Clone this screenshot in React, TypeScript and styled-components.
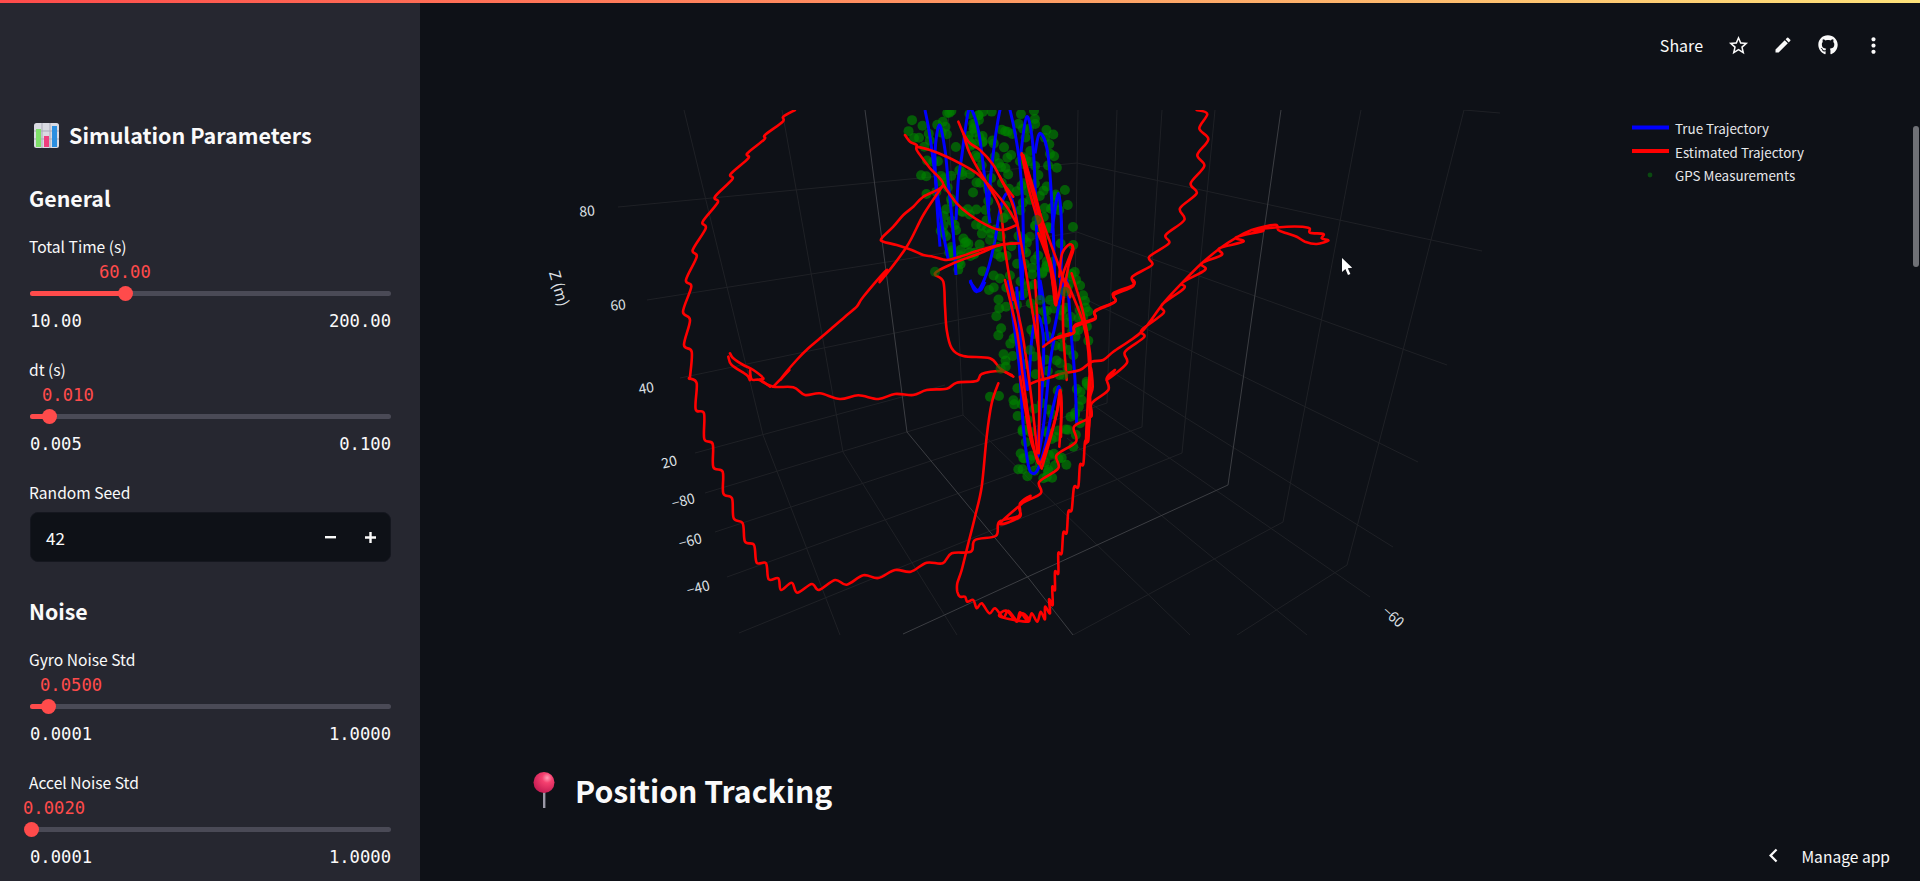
import React from "react";
import styled, { createGlobalStyle } from "styled-components";
import { MdStarBorder, MdEdit, MdMoreVert, MdChevronLeft } from "react-icons/md";
import { FaGithub } from "react-icons/fa";

const SANS = `"Noto Sans CJK SC", "Noto Sans", sans-serif`;
const MONO = `"DejaVu Sans Mono", monospace`;

const Global = createGlobalStyle`
  html, body { margin: 0; padding: 0; height: 100%; background: #0e1117; overflow: hidden; }
  body { font-family: ${SANS}; color: #fafafa; }
  * { box-sizing: border-box; }
`;

const Shell = styled.div`
  height: 881px;
  display: flex;
  flex-direction: column;
  overflow: hidden;
`;
const TopBar = styled.div`
  height: 3px;
  flex: none;
  background: linear-gradient(90deg, #ff4b4b, #fde27a);
`;
const Body = styled.div`
  flex: 1;
  display: flex;
  min-height: 0;
`;
const Sidebar = styled.aside`
  width: 420px;
  flex: none;
  background: #262730;
  padding: 112px 29px 0 30px;
  overflow: hidden;
`;
const Title = styled.h2`
  margin: 0 0 0 4px;
  height: 40px;
  display: flex;
  align-items: center;
  gap: 10px;
  font-size: 21.5px;
  font-weight: 600;
  line-height: 40px;
  white-space: nowrap;
`;
const Section = styled.h3<{ $top: number; $bottom: number }>`
  margin: ${(p) => p.$top}px 0 ${(p) => p.$bottom}px -1px;
  height: 32px;
  font-size: 21.3px;
  font-weight: 600;
  line-height: 32px;
`;
const Label = styled.div`
  height: 24px;
  margin-left: -1px;
  font-size: 15.6px;
  line-height: 24px;
  color: #fafafa;
  white-space: nowrap;
`;
const SliderField = styled.div`
  margin-bottom: 25px;
`;
const Rail = styled.div`
  position: relative;
  margin-top: 33px;
  height: 5px;
  border-radius: 3px;
  background: #4a4a56;
`;
const RailFill = styled.div<{ $w: number }>`
  position: absolute;
  left: 0;
  top: 0;
  bottom: 0;
  width: ${(p) => p.$w}px;
  border-radius: 3px;
  background: #ff4b4b;
`;
const Thumb = styled.div<{ $x: number }>`
  position: absolute;
  left: ${(p) => p.$x - 7.5}px;
  top: -5px;
  width: 15px;
  height: 15px;
  border-radius: 50%;
  background: #ff4b4b;
`;
const Value = styled.div<{ $x: number }>`
  position: absolute;
  left: ${(p) => p.$x}px;
  top: -30px;
  font-family: ${MONO};
  font-size: 17.2px;
  line-height: 22px;
  color: #ff4b4b;
  white-space: nowrap;
`;
const MinMax = styled.div`
  margin-top: 14px;
  height: 22px;
  display: flex;
  justify-content: space-between;
  font-family: ${MONO};
  font-size: 17.2px;
  line-height: 22px;
  color: #fafafa;
`;
const SeedBox = styled.div`
  margin-top: 8px;
  height: 50px;
  display: flex;
  align-items: center;
  padding-left: 15px;
  border-radius: 8px;
  background: #0e1117;
  border: 1px solid #15171f;
  font-size: 17px;
`;
const SeedValue = styled.span`
  flex: 1;
`;
const StepBtn = styled.span`
  width: 40px;
  display: flex;
  align-items: center;
  justify-content: center;
`;
const Main = styled.main`
  position: relative;
  flex: 1;
  min-width: 0;
  overflow: hidden;
`;
const Header = styled.header`
  height: 84px;
  display: flex;
  align-items: center;
  justify-content: flex-end;
  padding-right: 37px;
  gap: 25px;
`;
const Share = styled.span`
  font-size: 16px;
`;
const HeaderIcon = styled.span`
  display: flex;
  width: 20px;
  justify-content: center;
  color: #fafafa;
  svg { flex: none; }
`;
const PlotFrame = styled.div`
  height: 560px;
`;
const Plot = styled.svg`
  display: block;
  width: 1500px;
  height: 560px;
`;
const Heading = styled.h1`
  margin: 121px 0 0 113px;
  display: flex;
  align-items: center;
  gap: 20px;
  height: 44px;
  font-size: 30.2px;
  font-weight: 600;
  line-height: 44px;
  white-space: nowrap;
`;
const Scrollbar = styled.div`
  position: absolute;
  right: 1px;
  top: 123px;
  width: 6px;
  height: 141px;
  border-radius: 3px;
  background: #6f7176;
`;
const Manage = styled.div`
  position: absolute;
  right: 30px;
  bottom: 12px;
  display: flex;
  align-items: center;
  gap: 14px;
  font-size: 15.6px;
  line-height: 24px;
  color: #fafafa;
`;
const TickText = styled.text<{ $size?: number }>`
  font-family: ${SANS};
  font-size: ${(p) => p.$size ?? 14}px;
  fill: #dfe1e6;
`;
const LegendText = styled.text`
  font-family: ${SANS};
  font-size: 13.4px;
  fill: #e6e7ea;
`;

/* ---------- drawing data: points are read from the reference at 3x, per crop ---------- */
type Pt = [number, number];
const parse = (s: string): Pt[] =>
  s.trim().split(/\s+/).map((p) => {
    const [a, b] = p.split(",").map(Number);
    return [a, b] as Pt;
  });
const crop = (ox: number, oy: number, s: string): Pt[] =>
  parse(s).map(([x, y]) => [ox + x / 3, oy + y / 3] as Pt);
const Z3 = (s: string) => crop(530, 100, s);
const Z4 = (s: string) => crop(1000, 100, s);
const Z5 = (s: string) => crop(530, 370, s);
const Z6 = (s: string) => crop(1000, 370, s);
const Z10 = (s: string) => crop(880, 100, s);
const Z11 = (s: string) => crop(960, 280, s);

const OX = 420;
const OY = 87;
const line = (pts: Pt[]) => "M" + pts.map(([x, y]) => `${(x - OX).toFixed(1)} ${(y - OY).toFixed(1)}`).join("L");
const smooth = (pts: Pt[]) => {
  let d = `M${pts[0][0] - OX} ${pts[0][1] - OY}`;
  for (let i = 0; i < pts.length - 1; i++) {
    const p0 = pts[Math.max(0, i - 1)];
    const p1 = pts[i];
    const p2 = pts[i + 1];
    const p3 = pts[Math.min(pts.length - 1, i + 2)];
    d += `C${(p1[0] + (p2[0] - p0[0]) / 6 - OX).toFixed(1)} ${(p1[1] + (p2[1] - p0[1]) / 6 - OY).toFixed(1)} ${(p2[0] - (p3[0] - p1[0]) / 6 - OX).toFixed(1)} ${(p2[1] - (p3[1] - p1[1]) / 6 - OY).toFixed(1)} ${(p2[0] - OX).toFixed(1)} ${(p2[1] - OY).toFixed(1)}`;
  }
  return d;
};

const gridFaint: Pt[][] = [
  [[684,110],[763,435],[840,635]],
  [[782,110],[843,452],[957,635]],
  [[618,207],[1077,163],[1482,251]],
  [[647,300],[1077,232],[1447,365]],
  [[680,378],[1077,295],[1418,462]],
  [[695,453],[902,397],[945,385]],
  [[705,493],[963,415]],
  [[715,532],[1107,403]],
  [[727,577],[1142,427]],
  [[739,633],[1182,453]],
  [[1283,522],[1073,635]],
  [[1347,565],[1237,635]],
  [[963,415],[1190,635]],
  [[1067,438],[1307,635]],
  [[1093,405],[1370,597]],
  [[1117,375],[1393,547]],
  [[1361,110],[1312,370],[1283,522]],
  [[1464,110],[1398,370],[1347,565]],
  [[1464,110],[1500,113]],
  [[1215,110],[1190,370],[1182,453]],
  [[1162,110],[1145,370],[1142,427]],
  [[1117,110],[1107,403]],
  [[1078,110],[1075,295],[1075,385]],
  [[963,415],[948,110]],
];
const gridBright: Pt[][] = [
  [[865,110],[907,432],[1030,580],[1073,635]],
  [[903,634],[1228,485]],
  [[1281,110],[1243,380],[1228,485]],
];

const reds: Pt[][] = [
  [
    ...Z3("795,30 760,50 758,65 705,105 703,118 652,160 655,175 602,222 607,238 555,290 563,308 518,365 527,385 488,450 500,470 468,540 484,560 459,635 480,660 462,735 485,755 480,830"),
    ...Z5("478,25 500,40 497,118 522,130 523,207 548,222 550,291 578,305 580,370 606,385 611,445 638,460 645,515 672,525 680,578 708,580 716,628 745,625 753,660 785,638 802,668 845,642 867,660 915,630 950,644 1000,616 1045,624 1095,600 1142,605 1190,578 1238,580 1265,550 1323,545 1335,510 1398,497 1408,455 1467,437 1470,400 1500,380"),
    ...Z6("0,460 60,440 60,405 122,370 118,335 175,295 170,255 228,215 222,170 272,140 275,100 325,60 320,25 345,0"),
    ...Z4("320,840 380,790 375,755 432,712 425,690 490,640 485,615 552,565 547,548 615,510 605,490 665,465 658,445 730,425 708,412 790,392 755,390 860,380 925,383 930,398 970,402 965,415 985,422 950,432 915,425 890,410 860,400 835,390 830,375 800,378 755,390 710,412 660,445 605,490 550,545 490,610 430,690 385,725 340,755 310,780 275,785 240,810 190,820 150,832"),
    ...Z11("280,290 240,300 210,312"),
  ],
  [
    ...Z4("590,30 622,42 598,85 625,118 592,165 613,198 572,250 590,280 540,325 553,360 497,405 507,430 448,470 456,495 397,530 400,558 342,585 345,605 285,632 285,655 225,675 218,700 165,715"),
    ...Z11("330,160 285,175 250,200"),
  ],
  [
    ...Z5("1405,40 1385,100 1370,200 1355,350 1335,440 1315,520 1295,600 1282,640 1282,665 1290,680 1305,680 1312,695 1330,690 1340,715 1355,700 1378,730 1395,715 1420,742 1435,722 1460,750 1478,730 1495,755"),
    ...Z6("0,740 20,722 50,755 60,727 85,755 95,730 112,755 122,725 135,748 135,710 150,730 147,688 158,705 157,650 165,660 165,605 175,610 175,550 185,550 190,488 200,488 205,425 215,420 222,352 235,350 240,285 250,283 255,215 265,212 268,145 275,135 270,85 278,50 270,0"),
    ...Z11("378,485 390,405 385,215 370,130 340,50 315,0"),
    ...Z10("570,590 530,480 480,340 430,165"),
  ],
  [
    ...Z10("75,105 90,125 110,135 110,150 135,185 150,205 190,255 130,290 100,320 70,345 40,380 5,415 10,425 50,435 95,450 130,465 160,470 200,480 240,470 300,450 360,435 410,430"),
  ],
  [
    ...Z10("190,255 130,345 80,440 0,545"),
    ...Z3("1070,510 1000,590 980,620 945,650 905,685 870,715 835,745 800,780 750,840"),
    ...Z5("778,0 730,50"),
  ],
  [...Z10("110,140 150,150 200,170 240,190 290,220 340,270 380,320 410,370")],
  [...Z10("235,65 250,100 270,130 300,150 340,195 370,250 400,290")],
  [...Z10("250,100 265,150 290,200 320,250 360,325 375,450 400,600")],
  [...Z10("190,255 230,310 270,345 330,380 370,390 410,375")],
  [
    ...Z3("1450,830 1410,805 1380,775 1300,768 1265,745 1250,690 1245,620 1240,545 1215,520 1270,490 1350,460 1410,435 1470,430"),
  ],
  [
    ...Z3("600,760 610,775 640,795 670,810 700,835"),
    ...Z5("690,30 730,50 790,52 825,75 870,70 930,87 985,76 1045,87 1095,72 1150,75 1190,60 1250,56 1280,38 1340,33 1355,12 1410,3 1445,15"),
  ],
  [...Z3("595,770 605,795 650,825 660,840"), ...Z5("660,0 665,28 690,30 720,50")],
  [...Z10("425,165 450,250 480,360 505,470 525,560 530,600")],
  [...Z10("430,170 470,300 500,440 520,560")],
  [...Z11("135,0 170,150 190,300 210,440 235,550 260,500 290,400 302,340 303,470")],
  [...Z11("150,0 185,150 210,320 228,480 232,520")],
  [...Z11("225,0 232,120 238,300 236,520")],
  [...Z4("65,160 85,260 110,350 130,420 155,500 170,590 165,610 150,500 115,400")],
  [...Z4("165,610 175,590 190,520 205,480 218,440 205,435 185,465 178,530")],
  [...Z4("215,435 220,450 205,500 190,600 190,700 200,840")],
  [...Z4("0,230 40,320 65,440 95,620 130,840")],
  [...Z6("60,20 90,200 110,260 125,295")],
  [...Z6("125,295 150,210 170,130 180,60 185,120 178,230")],
  [...Z4("215,520 250,640 270,760 270,840")],
  [...Z11("285,175 340,160 345,140 405,118 405,95 465,65 460,40 520,15 520,0")],
];

const blues: Pt[][] = [
  Z10("135,30 150,110 175,300 190,400 205,480"),
  Z10("180,440 170,300 165,160 178,75 195,150 205,250 220,400 228,525"),
  Z10("228,360 235,240 245,170 265,35 282,45 300,120 325,330 330,370"),
  Z10("270,540 290,575 320,520 345,420 360,330 380,280 400,310 415,400 425,560 430,600"),
  Z10("325,330 335,200 360,30 375,20 390,30 420,200 430,400 425,600"),
  Z10("420,180 440,50 460,150 470,400 480,600"),
  Z10("465,160 480,100 505,170 520,400 525,600"),
  Z10("515,400 535,280 545,400 540,600"),
  Z11("145,0 160,120 178,260 190,440 205,555 218,580 235,565 255,500 275,400 295,322 300,340"),
  Z11("170,20 180,160 195,290 205,322 215,180 232,105 250,170 248,300 232,525 250,440 270,250 282,180"),
  Z11("240,0 250,60 265,180 280,160 300,60 320,0 335,180 345,300 350,430"),
  Z11("30,5 50,30 62,30 75,5"),
];

const inside = (x: number, y: number, poly: Pt[]) => {
  let c = false;
  for (let i = 0, j = poly.length - 1; i < poly.length; j = i++) {
    const [xi, yi] = poly[i];
    const [xj, yj] = poly[j];
    if (yi > y !== yj > y && x < ((xj - xi) * (y - yi)) / (yj - yi) + xi) c = !c;
  }
  return c;
};
const cloud: Pt[] = [[915,110],[1052,110],[1062,170],[1076,230],[1090,300],[1090,400],[1082,430],[1060,480],[1045,485],[1018,480],[1012,400],[1002,350],[990,310],[985,290],[1000,280],[950,270],[925,200],[908,130]];
const makeDots = () => {
  const out: Pt[] = [];
  let seed = 42;
  const rnd = () => {
    seed = (seed * 16807) % 2147483647;
    return seed / 2147483647;
  };
  while (out.length < 330) {
    const x = 905 + rnd() * 190;
    const y = 108 + rnd() * 380;
    if (inside(x, y, cloud)) out.push([x, y]);
  }
  return out;
};
const dots = makeDots();
const brownDots: Pt[] = [
  ...Z11("122,266 310,285 240,60 300,250 210,210"),
  ...Z10("370,355 330,420 470,360 450,410 555,575 165,515"),
];
const fixedDots: Pt[] = Z11("90,350 117,348 87,30 355,150 325,210 380,305 365,360 345,405 360,430 250,595 175,568 188,568 190,535 265,570");

const Sim = () => (
  <svg width="25" height="25" viewBox="0 0 25 25">
    <rect width="25" height="25" rx="2.5" fill="#d9dae2" />
    <path d="M0 8h25M0 16h25M8 0v25M16 0v25" stroke="#a9abb8" strokeWidth="1" />
    <rect x="2" y="6" width="5" height="18" fill="#7fe06a" />
    <rect x="10" y="13" width="5" height="11" fill="#ef3f7e" />
    <rect x="18" y="3" width="5" height="21" fill="#2b8fe0" />
  </svg>
);
const Pin = () => (
  <svg width="22" height="36" viewBox="0 0 22 36">
    <defs>
      <radialGradient id="ball" cx="0.65" cy="0.28" r="0.8">
        <stop offset="0" stopColor="#ff9db5" />
        <stop offset="0.3" stopColor="#f5406f" />
        <stop offset="1" stopColor="#c01850" />
      </radialGradient>
    </defs>
    <rect x="10" y="18" width="2.4" height="18" fill="#9a98a6" />
    <circle cx="11" cy="10.5" r="10.5" fill="url(#ball)" />
  </svg>
);

type SliderProps = { label: string; value: string; x: number; vx: number; min: string; max: string };
const Slider = ({ label, value, x, vx, min, max }: SliderProps) => (
  <SliderField>
    <Label>{label}</Label>
    <Rail>
      <RailFill $w={x} />
      <Thumb $x={x} />
      <Value $x={vx}>{value}</Value>
    </Rail>
    <MinMax>
      <span>{min}</span>
      <span>{max}</span>
    </MinMax>
  </SliderField>
);

const ticks: [string, number, number, number][] = [
  ["80", 587, 210, -5],
  ["60", 618, 304, -6],
  ["40", 646, 387, -10],
  ["20", 669, 461, -15],
  ["−80", 683, 500, -15],
  ["−60", 690, 540, -15],
  ["−40", 698, 587, -15],
  ["−60", 1394, 616, 42],
];

export default function App() {
  return (
    <Shell>
      <Global />
      <TopBar />
      <Body>
        <Sidebar>
          <Title>
            <Sim />
            Simulation Parameters
          </Title>
          <Section $top={27} $bottom={20}>General</Section>
          <Slider label="Total Time (s)" value="60.00" x={95} vx={69} min="10.00" max="200.00" />
          <Slider label="dt (s)" value="0.010" x={19} vx={12} min="0.005" max="0.100" />
          <Label>Random Seed</Label>
          <SeedBox>
            <SeedValue>42</SeedValue>
            <StepBtn>
              <svg width="11" height="3"><rect width="11" height="2.4" fill="#fafafa" /></svg>
            </StepBtn>
            <StepBtn>
              <svg width="11" height="11"><path d="M0 5.5h11M5.5 0v11" stroke="#fafafa" strokeWidth="2.4" /></svg>
            </StepBtn>
          </SeedBox>
          <Section $top={33} $bottom={20}>Noise</Section>
          <Slider label="Gyro Noise Std" value="0.0500" x={18} vx={10} min="0.0001" max="1.0000" />
          <Slider label="Accel Noise Std" value="0.0020" x={1} vx={-7} min="0.0001" max="1.0000" />
        </Sidebar>
        <Main>
          <Header>
            <Share>Share</Share>
            <HeaderIcon><MdStarBorder size={23} /></HeaderIcon>
            <HeaderIcon><MdEdit size={20} /></HeaderIcon>
            <HeaderIcon><FaGithub size={20} /></HeaderIcon>
            <HeaderIcon><MdMoreVert size={25} /></HeaderIcon>
          </Header>
          <PlotFrame>
            <Plot viewBox="0 0 1500 560">
              <defs>
                <clipPath id="gl">
                  <rect x="0" y={110 - OY} width="1500" height="525" />
                </clipPath>
              </defs>
              <g clipPath="url(#gl)" fill="none">
                {gridFaint.map((g, i) => (
                  <path key={i} d={line(g)} stroke="#1f2126" strokeWidth="1" />
                ))}
                {gridBright.map((g, i) => (
                  <path key={i} d={line(g)} stroke="#3c3e43" strokeWidth="1" />
                ))}
                {[...dots, ...fixedDots].map(([x, y], i) => (
                  <circle key={i} cx={x - OX} cy={y - OY} r="5" fill="#008000" fillOpacity="0.68" />
                ))}
                {blues.map((b, i) => (
                  <path key={i} d={smooth(b)} stroke="#0000ff" strokeWidth="3" strokeLinejoin="round" />
                ))}
                {reds.map((r, i) => (
                  <path key={i} d={smooth(r)} stroke="#ff0000" strokeWidth="2.6" strokeLinejoin="round" strokeLinecap="round" />
                ))}
                {brownDots.map(([x, y], i) => (
                  <circle key={i} cx={x - OX} cy={y - OY} r="5" fill="#008000" fillOpacity="0.55" />
                ))}
              </g>
              {ticks.map(([t, x, y, r], i) => (
                <TickText key={i} x={x - OX} y={y - OY} textAnchor="middle" dominantBaseline="central" transform={`rotate(${r} ${x - OX} ${y - OY})`}>
                  {t}
                </TickText>
              ))}
              <TickText $size={15} x={560 - OX} y={288 - OY} textAnchor="middle" dominantBaseline="central" transform={`rotate(74 ${560 - OX} ${288 - OY})`}>
                Z (m)
              </TickText>
              <path d={`M${1632 - OX} ${127.5 - OY}h37`} stroke="#0000ff" strokeWidth="4" />
              <path d={`M${1632 - OX} ${151 - OY}h37`} stroke="#ff0000" strokeWidth="4" />
              <circle cx={1650 - OX} cy={175 - OY} r="2.4" fill="#0a4a10" />
              <LegendText x={1675 - OX} y={128 - OY} dominantBaseline="central">True Trajectory</LegendText>
              <LegendText x={1675 - OX} y={152 - OY} dominantBaseline="central">Estimated Trajectory</LegendText>
              <LegendText x={1675 - OX} y={175 - OY} dominantBaseline="central">GPS Measurements</LegendText>
              <path
                d={`M${1342 - OX} ${258 - OY}l0 14l3.4-3l2.6 6l2.4-1l-2.6-5.8l4.4-.4z`}
                fill="#ffffff"
              />
            </Plot>
          </PlotFrame>
          <Heading>
            <Pin />
            Position Tracking
          </Heading>
          <Scrollbar />
          <Manage>
            <MdChevronLeft size={27} />
            Manage app
          </Manage>
        </Main>
      </Body>
    </Shell>
  );
}
